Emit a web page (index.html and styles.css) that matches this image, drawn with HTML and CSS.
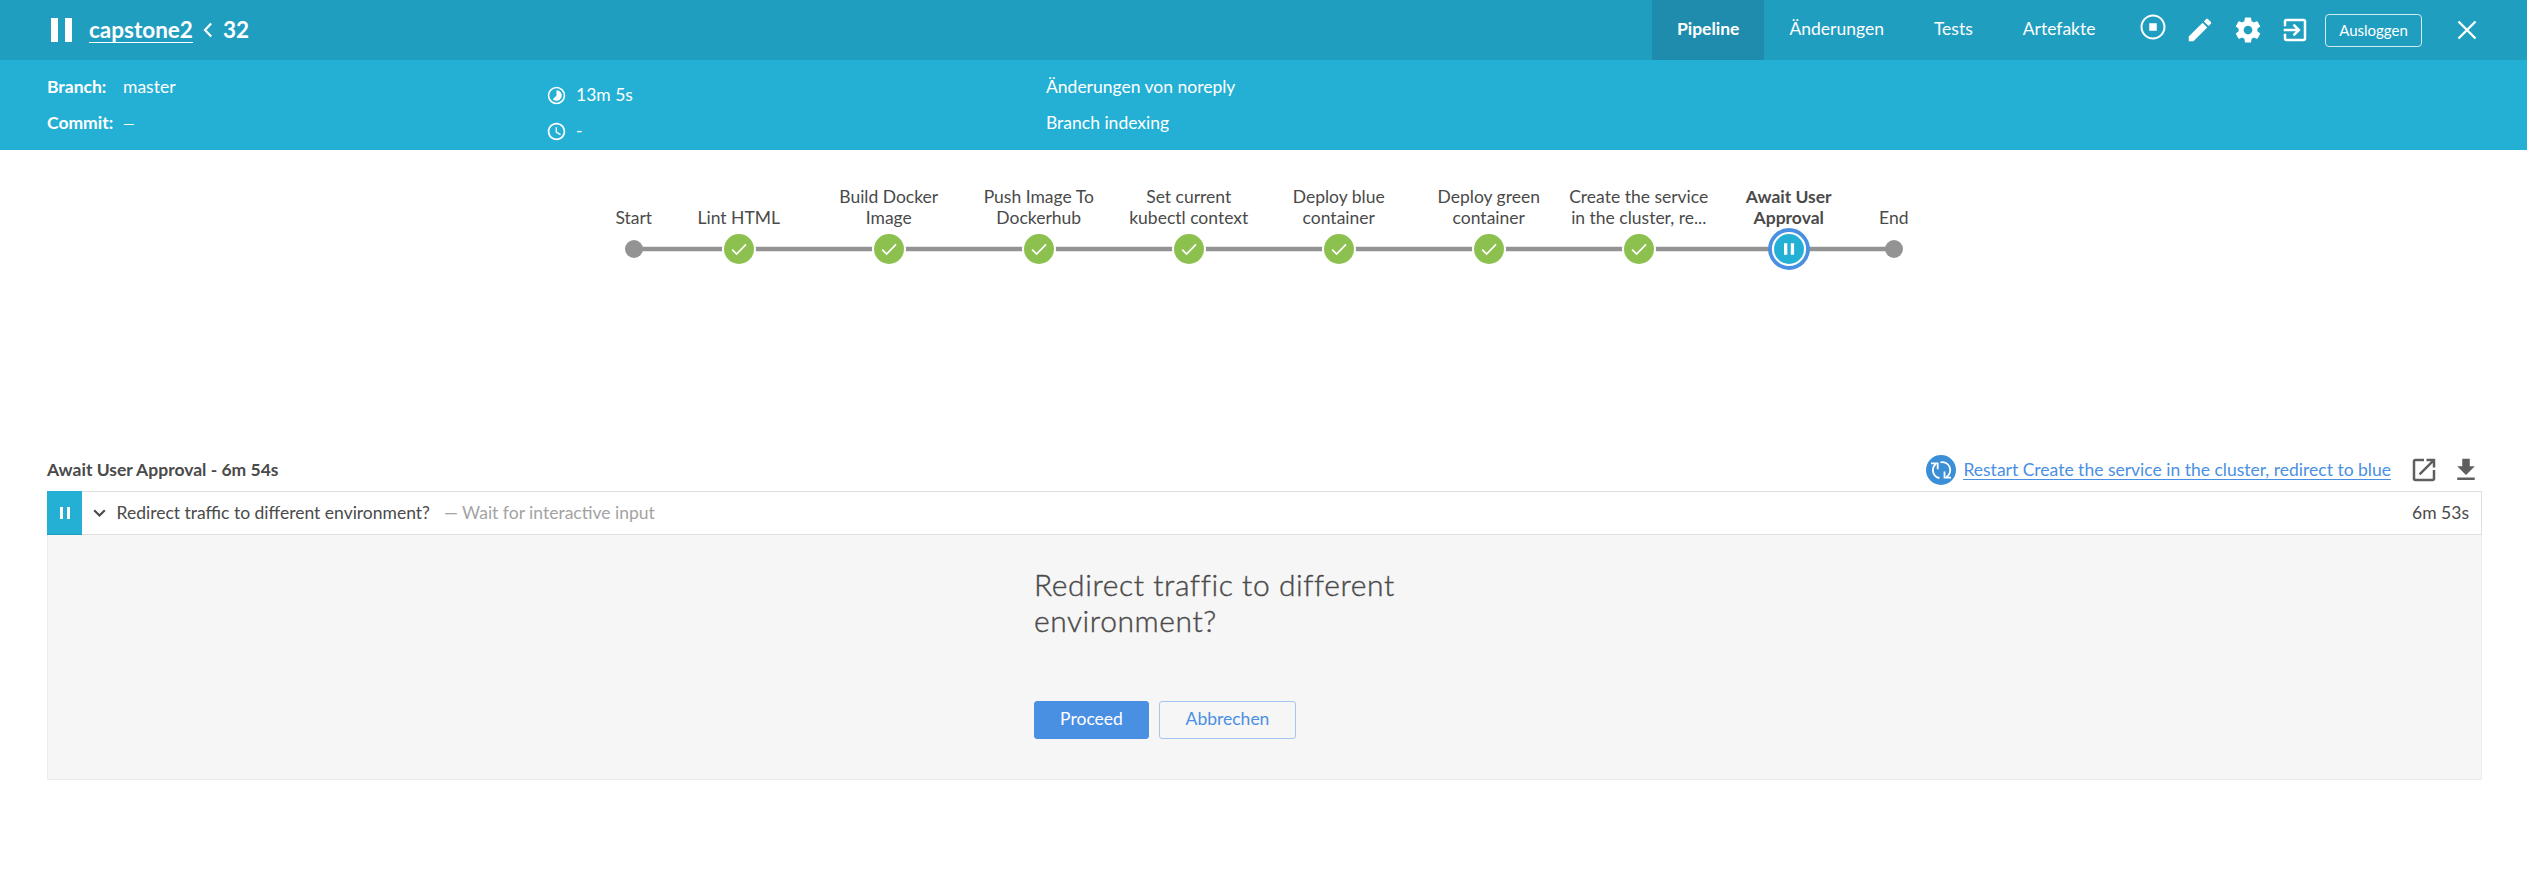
FILE: index.html
```html
<!DOCTYPE html>
<html lang="de">
<head>
<meta charset="utf-8">
<title>capstone2 / 32</title>
<link rel="stylesheet" href="styles.css">
</head>
<body>
<header class="topbar">
  <svg class="pause" width="23" height="26" viewBox="0 0 23 26"><path d="M1 1h7v24H1zM15 1h7v24h-7z" fill="#fff"/></svg>
  <h1 class="title"><a class="project">capstone2</a><svg class="sep" width="12" height="16" viewBox="0 0 12 16"><path d="M9.200 1.500 3 8l6.200 6.500" fill="none" stroke="#fff" stroke-width="2.200"/></svg><span class="run">32</span></h1>
  <nav class="tabs">
    <a class="tab active">Pipeline</a>
    <a class="tab">Änderungen</a>
    <a class="tab">Tests</a>
    <a class="tab">Artefakte</a>
  </nav>
  <div class="tools">
    <svg class="stop" width="30" height="30" viewBox="0 0 24 24"><path fill="#fff" d="M12 2C6.480 2 2 6.480 2 12s4.480 10 10 10 10-4.480 10-10S17.520 2 12 2zm0 18.400c-4.640 0-8.400-3.760-8.400-8.400S7.360 3.600 12 3.600s8.400 3.760 8.400 8.400-3.760 8.400-8.400 8.400zM9 9h6v6H9z"/></svg>
    <svg width="30" height="30" viewBox="0 0 24 24"><path fill="#fff" d="M3 17.250V21h3.750L17.810 9.940l-3.750-3.750L3 17.250zM20.710 7.040c.39-.39.39-1.020 0-1.410l-2.340-2.340c-.39-.39-1.020-.39-1.410 0l-1.830 1.830 3.750 3.750 1.830-1.830z"/></svg>
    <svg width="30" height="30" viewBox="0 0 24 24"><path fill="#fff" d="M19.430 12.980c.04-.32.07-.64.07-.98s-.03-.66-.07-.98l2.110-1.650c.19-.15.24-.42.12-.64l-2-3.460c-.12-.22-.39-.3-.61-.22l-2.490 1c-.52-.4-1.080-.73-1.690-.98l-.38-2.650C14.460 2.180 14.250 2 14 2h-4c-.25 0-.46.18-.49.42l-.38 2.650c-.61.25-1.170.59-1.690.98l-2.490-1c-.23-.09-.49 0-.61.22l-2 3.460c-.13.22-.07.49.12.64l2.110 1.650c-.04.32-.07.65-.07.98s.03.66.07.98l-2.110 1.650c-.19.15-.24.42-.12.64l2 3.460c.12.22.39.3.61.22l2.490-1c.52.4 1.080.73 1.690.98l.38 2.650c.03.24.24.42.49.42h4c.25 0 .46-.18.49-.42l.38-2.650c.61-.25 1.170-.59 1.690-.98l2.490 1c.23.09.49 0 .61-.22l2-3.460c.12-.22.07-.49-.12-.64l-2.110-1.650zM12 15.500c-1.930 0-3.500-1.570-3.500-3.500s1.570-3.500 3.500-3.500 3.500 1.570 3.500 3.500-1.570 3.500-3.500 3.500z"/></svg>
    <svg width="30" height="30" viewBox="0 0 24 24"><path fill="#fff" d="M10.090 15.590 11.500 17l5-5-5-5-1.410 1.410L12.670 11H3v2h9.670l-2.580 2.590zM19 3H5c-1.110 0-2 .9-2 2v4h2V5h14v14H5v-4H3v4c0 1.100.89 2 2 2h14c1.100 0 2-.9 2-2V5c0-1.100-.9-2-2-2z"/></svg>
  </div>
  <a class="logout">Ausloggen</a>
  <svg class="close" width="20" height="20" viewBox="0 0 20 20"><path d="M1.500 1.500l17 17M18.500 1.500l-17 17" stroke="#fff" stroke-width="2.400"/></svg>
</header>

<section class="info">
  <div class="col source">
    <div><b>Branch:</b><span>master</span></div>
    <div><b>Commit:</b><span class="dash">—</span></div>
  </div>
  <div class="col times">
    <div><svg width="21" height="21" viewBox="0 0 24 24"><path fill="#fff" d="M12 2a10 10 0 1 0 0 20 10 10 0 0 0 0-20zm0 18.200a8.200 8.200 0 1 1 0-16.400 8.200 8.200 0 0 1 0 16.400z"/><path fill="#fff" d="M12 6v6l-4.240 4.240A6 6 0 1 0 12 6z"/></svg><span>13m 5s</span></div>
    <div><svg width="21" height="21" viewBox="0 0 24 24"><path fill="#fff" d="M11.990 2C6.470 2 2 6.480 2 12s4.470 10 9.990 10C17.520 22 22 17.520 22 12S17.520 2 11.990 2zM12 20c-4.420 0-8-3.580-8-8s3.580-8 8-8 8 3.580 8 8-3.580 8-8 8zm.5-13H11v6l5.250 3.150.75-1.230-4.500-2.670z"/></svg><span>-</span></div>
  </div>
  <div class="col cause">
    <div>Änderungen von noreply</div>
    <div>Branch indexing</div>
  </div>
</section>

<section class="graph">
  <div class="labels">
    <div class="label end">Start</div>
    <div class="label">Lint HTML</div>
    <div class="label">Build Docker<br>Image</div>
    <div class="label">Push Image To<br>Dockerhub</div>
    <div class="label">Set current<br>kubectl context</div>
    <div class="label">Deploy blue<br>container</div>
    <div class="label">Deploy green<br>container</div>
    <div class="label">Create the service<br>in the cluster, re...</div>
    <div class="label selected">Await User<br>Approval</div>
    <div class="label end">End</div>
  </div>
  <svg class="track" width="1320" height="44" viewBox="0 0 1320 44">
    <defs>
      <g id="ok"><circle r="17" fill="#fff"/><circle r="15" fill="#8cc04f"/><path d="M-6.800 .6-2.400 5 7-4.600" fill="none" stroke="#fff" stroke-width="1.700"/></g>
    </defs>
    <path d="M30 22H1290" stroke="#949393" stroke-width="4.400"/>
    <circle cx="30" cy="22" r="9" fill="#949393"/>
    <use href="#ok" x="135" y="22"/><use href="#ok" x="285" y="22"/><use href="#ok" x="435" y="22"/><use href="#ok" x="585" y="22"/><use href="#ok" x="735" y="22"/><use href="#ok" x="885" y="22"/><use href="#ok" x="1035" y="22"/>
    <circle cx="1185" cy="22" r="19" fill="#fff" stroke="#4a90e2" stroke-width="3.800"/>
    <circle cx="1185" cy="22" r="15" fill="#24b0d5"/>
    <path d="M1180 16.200h3.300v11.600h-3.300zM1186.800 16.200h3.300v11.600h-3.300z" fill="#fff"/>
    <circle cx="1290" cy="22" r="9" fill="#949393"/>
  </svg>
</section>

<section class="steps">
  <div class="heading">
    <h2>Await User Approval - 6m 54s</h2>
    <a class="restart"><svg width="30" height="30" viewBox="0 0 30 30"><circle cx="15" cy="15" r="15" fill="#3a8fd6"/><g fill="none" stroke="#fff" stroke-width="1.800"><path d="M5 8.300h6.700v6M9.800 9a8 8 0 0 0 3.700 14M25 22.700h-6.500V16.500M20.300 22A8 8 0 0 0 14.500 7.300"/></g></svg><span>Restart Create the service in the cluster, redirect to blue</span></a>
    <svg class="open" width="30" height="30" viewBox="0 0 24 24"><path fill="#5f5f5f" d="M19 19H5V5h7V3H5c-1.110 0-2 .9-2 2v14c0 1.100.89 2 2 2h14c1.100 0 2-.9 2-2v-7h-2v7zM14 3v2h3.590l-9.830 9.830 1.410 1.410L19 6.410V10h2V3h-7z"/></svg>
    <svg class="download" width="30" height="30" viewBox="0 0 24 24"><path fill="#5f5f5f" d="M19 9h-4V3H9v6H5l7 7 7-7zM5 18v2h14v-2H5z"/></svg>
  </div>
  <div class="step">
    <div class="status"><svg width="12" height="12" viewBox="0 0 12 12"><path d="M1 0h3v12H1zM8 0h3v12H8z" fill="#fff"/></svg></div>
    <svg class="chevron" width="13" height="9" viewBox="0 0 13 9"><path d="M1.200 1.200l5.300 5.300 5.300-5.300" fill="none" stroke="#4a4a4a" stroke-width="2.100"/></svg>
    <span class="name">Redirect traffic to different environment?</span>
    <span class="kind">— Wait for interactive input</span>
    <span class="duration">6m 53s</span>
  </div>
  <div class="panel">
    <div class="form">
      <h3>Redirect traffic to different environment?</h3>
      <div class="buttons"><button class="btn primary">Proceed</button><button class="btn">Abbrechen</button></div>
    </div>
  </div>
</section>
</body>
</html>
```
FILE: styles.css
```css
* { box-sizing: border-box; }
body { margin: 0; background: #fff; color: #4a4a4a; font: 17.5px/21px Lato, sans-serif; }
h1, h2, h3 { margin: 0; }
svg { display: block; flex: none; }
a { color: inherit; }

.topbar { display: flex; align-items: center; height: 60px; padding: 0 50px; background: #209ebf; color: #fff; }
.title { display: flex; align-items: center; margin-left: 16px; font-size: 22.5px; line-height: 26px; font-weight: 700; }
.project { height: 26px; border-bottom: 1px solid #fff; }
.sep { margin: 0 18px 0 9px; }
.run { margin-left: -9px; }
.tabs { display: flex; height: 60px; margin-left: auto; }
.tab { padding: 18px 25px 0; line-height: 21px; }
.tab.active { background: #1f8cae; font-weight: 700; }
.tools { display: flex; gap: 17.500px; margin-left: 17px; }
.stop { margin-top: -3px; }
.logout { width: 97px; height: 33px; margin-left: 15px; border: 1px solid #d2ecf2; border-radius: 4px; font-size: 15px; line-height: 30px; text-align: center; }
.close { margin-left: 35px; }

.info { display: flex; height: 90px; background: #24b0d5; color: #fff; }
.info .col > div { display: flex; height: 36px; line-height: 21px; }
.source { width: 547px; padding: 16px 0 0 47px; }
.source b { width: 76px; }
.source .dash { padding-top: 1px; font-size: 14.5px; }
.times { width: 499px; padding-top: 24px; }
.times svg { margin: 1px 9px 0 -1px; }
.cause { padding-top: 16px; }

.graph { display: flex; flex-direction: column; align-items: flex-start; height: 302px; padding: 36px 0 0 603.750px; }
.labels { display: flex; align-items: flex-end; height: 42px; }
.label { width: 150px; text-align: center; }
.label.end { width: 60px; }
.label.selected { font-weight: 700; }
.track { margin-top: -1.300px; }

.steps { padding: 0 45px 0 47px; }
.heading { display: flex; align-items: center; height: 39px; padding-bottom: 3px; }
.heading h2 { margin-top: -2px; font-size: 17.500px; font-weight: 700; }
.restart { display: flex; align-items: center; gap: 7px; margin-left: auto; color: #4a90e2; }
.restart span { margin-top: -1px; border-bottom: 1px solid #4a90e2; line-height: 19px; }
.open { margin-left: 18px; }
.download { margin: 0 1px 0 12px; }
.step { display: flex; align-items: center; height: 44px; border: 1px solid #dfdfdf; border-left: 0; }
.status { display: flex; align-items: center; justify-content: center; width: 35px; height: 44px; background: #24b0d5; border-bottom: 1px solid #209ebf; }
.chevron { margin: 0 11px 0 10.500px; }
.name, .kind, .duration { margin-top: -1px; }
.kind { margin-left: 14px; color: #a3a3a3; }
.duration { margin-left: auto; padding-right: 12px; }
.panel { height: 245px; padding: 31px 0 0 986px; background: #f6f6f6; border: 1px solid #ececec; border-top: 0; }
.form { width: 400px; }
.form h3 { height: 135px; font-size: 30px; line-height: 36px; font-weight: 300; letter-spacing: .57px; -webkit-text-stroke: .4px #4a4a4a; }
.buttons { display: flex; gap: 10px; }
.btn { width: 137px; height: 38px; padding: 0 0 3px; border: 1px solid #a4c7f0; border-radius: 3px; background: transparent; color: #4a90e2; font: 17.5px Lato, sans-serif; }
.btn.primary { width: 115px; background: #4a90e2; border-color: #4a90e2; color: #fff; }
```
